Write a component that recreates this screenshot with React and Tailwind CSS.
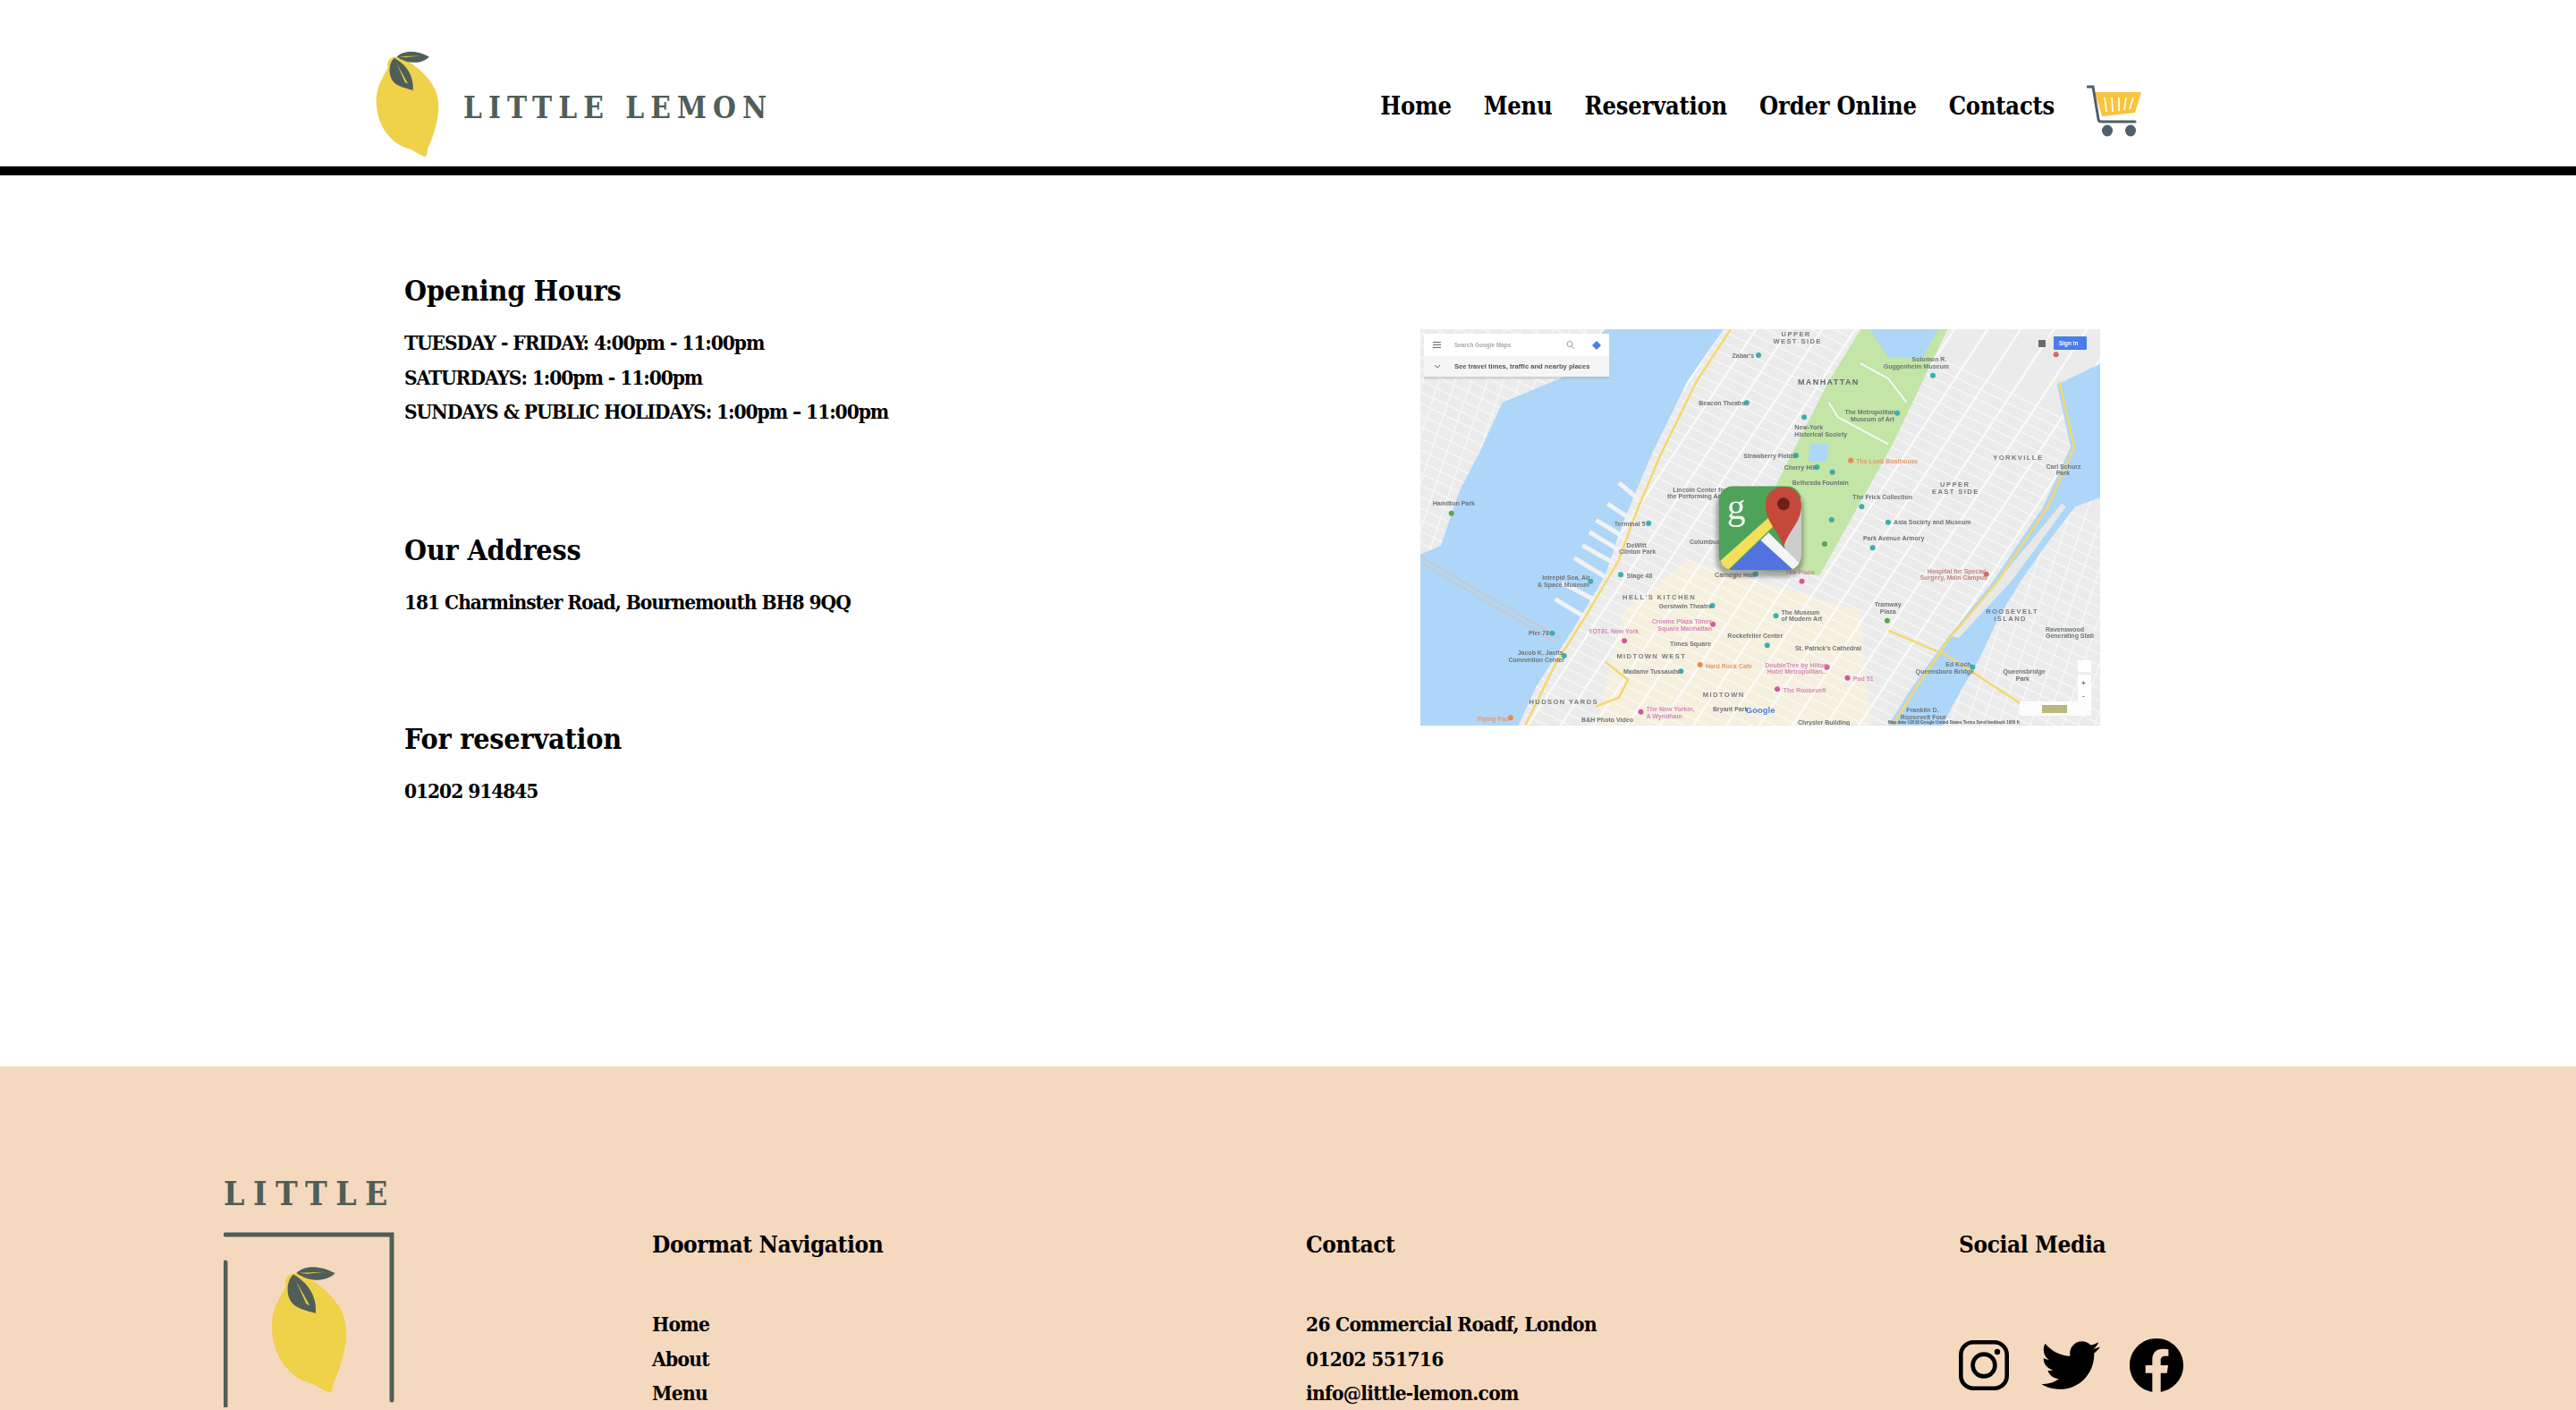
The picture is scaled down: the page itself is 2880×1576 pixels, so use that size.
import { FaTwitter, FaFacebook } from 'react-icons/fa';

// reference map was read off a zoomed crop, so keep its coords and convert here
const mx = (x) => (x - 35) / 1.96;
const my = (y) => (y - 55) / 3;
const pts = (list) => list.map(([x, y]) => `${mx(x).toFixed(1)},${my(y).toFixed(1)}`).join(' ');

const manhattan = [[700, 55], [620, 230], [540, 480], [480, 700], [440, 880], [370, 1060], [290, 1250], [250, 1383], [1060, 1383], [1110, 1260], [1190, 1090], [1290, 900], [1400, 650], [1460, 450], [1430, 240], [1525, 170], [1525, 55]];
const jersey = [[35, 55], [440, 55], [350, 215], [215, 300], [170, 450], [120, 600], [80, 780], [35, 810]];
const queens = [[1525, 620], [1470, 650], [1410, 770], [1350, 900], [1300, 1030], [1260, 1160], [1200, 1320], [1180, 1383], [1525, 1383]];
const roosevelt = [[1440, 640], [1450, 650], [1330, 900], [1215, 1090], [1200, 1085], [1300, 900]];
const park = [[1000, 55], [1190, 55], [1070, 440], [910, 880], [740, 860], [820, 560], [930, 230]];
const midtown = [[420, 1383], [480, 1000], [620, 830], [1000, 1000], [1020, 1383]];

const labels = [
  [826, 78, 'UPPER', 1], [808, 102, 'WEST SIDE', 1], [862, 240, 'MANHATTAN', 2], [1290, 494, 'YORKVILLE', 1], [1174, 582, 'UPPER', 1], [1156, 606, 'EAST SIDE', 1],
  [478, 960, "HELL'S KITCHEN", 1], [465, 1158, 'MIDTOWN WEST', 1], [654, 1288, 'MIDTOWN', 1], [273, 1313, 'HUDSON YARDS', 1], [1274, 1008, 'ROOSEVELT', 1], [1292, 1032, 'ISLAND', 1],
  [718, 150, "Zabar's", 0], [1112, 163, 'Solomon R.', 0], [1050, 186, 'Guggenheim Museum', 0], [645, 310, 'Beacon Theatre', 0], [965, 340, 'The Metropolitan', 0], [978, 363, 'Museum of Art', 0],
  [855, 392, 'New-York', 0], [855, 415, 'Historical Society', 0], [743, 488, 'Strawberry Fields', 0], [832, 527, 'Cherry Hill', 0], [850, 576, 'Bethesda Fountain', 0], [588, 600, 'Lincoln Center for', 0],
  [576, 623, 'the Performing Arts', 0], [982, 625, 'The Frick Collection', 0], [1072, 710, 'Asia Society and Museum', 0], [1005, 764, 'Park Avenue Armory', 0], [62, 645, 'Hamilton Park', 0], [460, 714, 'Terminal 5', 0],
  [625, 775, 'Columbus', 0], [487, 787, 'DeWitt', 0], [470, 809, 'Clinton Park', 0], [487, 888, 'Stage 48', 0], [302, 896, 'Intrepid Sea, Air', 0], [292, 919, '& Space Museum', 0], [680, 885, 'Carnegie Hall', 0],
  [558, 990, 'Gershwin Theatre', 0], [826, 1012, 'The Museum', 0], [826, 1034, 'of Modern Art', 0], [1030, 985, 'Tramway', 0], [1042, 1008, 'Plaza', 0], [272, 1082, 'Pier 78', 0], [708, 1090, 'Rockefeller Center', 0],
  [582, 1118, 'Times Square', 0], [856, 1133, "St. Patrick's Cathedral", 0], [248, 1148, 'Jacob K. Javits', 0], [228, 1172, 'Convention Center', 0], [480, 1210, 'Madame Tussauds', 0], [1186, 1186, 'Ed Koch', 0],
  [1120, 1210, 'Queensboro Bridge', 0], [1312, 1210, 'Queensbridge', 0], [1340, 1233, 'Park', 0], [1100, 1339, 'Franklin D.', 0], [1087, 1362, 'Roosevelt Four', 0], [676, 1337, 'Bryant Park', 0], [388, 1373, 'B&H Photo Video', 0],
  [1406, 523, 'Carl Schurz', 0], [1428, 545, 'Park', 0], [1405, 1069, 'Ravenswood', 0], [1405, 1091, 'Generating Stati', 0], [862, 1380, 'Chrysler Building', 0],
  [990, 505, 'The Loeb Boathouse', 3], [660, 1191, 'Hard Rock Cafe', 3], [160, 1369, 'Flying Pan', 3],
  [542, 1042, 'Crowne Plaza Times', 4], [555, 1066, 'Square Manhattan', 4], [403, 1075, 'YOTEL New York', 4], [790, 1188, 'DoubleTree by Hilton', 4], [795, 1211, 'Hotel Metropolitan...', 4], [983, 1234, 'Pod 51', 4],
  [830, 1272, 'The Roosevelt', 4], [530, 1337, 'The New Yorker,', 4], [530, 1360, 'A Wyndham', 4], [835, 876, 'The Plaza', 4], [1146, 874, 'Hospital for Special', 5], [1130, 896, 'Surgery, Main Campus', 5],
];

const dots = [
  [776, 142, 0], [1158, 210, 0], [750, 302, 0], [876, 350, 0], [1080, 336, 0], [858, 478, 0], [904, 518, 0], [938, 534, 0], [1002, 650, 0], [936, 694, 0], [1060, 702, 0], [1026, 788, 0], [535, 706, 0],
  [474, 878, 0], [408, 900, 0], [770, 876, 0], [675, 982, 0], [814, 1016, 0], [324, 1074, 0], [795, 1115, 0], [350, 1150, 0], [606, 1202, 0], [1245, 1188, 0],
  [978, 495, 3], [648, 1180, 3], [233, 1358, 3], [676, 1044, 4], [482, 1100, 4], [926, 1188, 4], [971, 1224, 4], [817, 1262, 4], [518, 1338, 4], [871, 900, 4], [1275, 876, 5], [1428, 140, 5],
  [103, 672, 6], [921, 775, 6], [1058, 1032, 6],
];

const labelFill = ['#6d7478', '#777b7e', '#60686c', '#e39a6c', '#d987b8', '#c98580'];
const dotFill = ['#3aaeb0', '', '', '#e88a4e', '#d9559c', '#d66a63', '#5aa64b'];

function MapPicture() {
  const avenues = Array.from({ length: 36 }, (_, i) => i);
  const streets = Array.from({ length: 80 }, (_, i) => i);
  return (
    <svg width="760" height="443" viewBox="0 0 760 443" className="block blur-[0.4px]">
      <defs>
        <clipPath id="mh"><polygon points={pts(manhattan)} /></clipPath>
        <clipPath id="side">
          <polygon points={pts(jersey)} />
          <polygon points={pts(queens)} />
        </clipPath>
        <clipPath id="icon"><rect x="95" y="40" width="277" height="282" rx="50" /></clipPath>
        <filter id="soft" x="-30%" y="-30%" width="160%" height="160%"><feGaussianBlur stdDeviation="7" /></filter>
      </defs>
      <rect width="760" height="443" fill="#aed6f8" />
      <polygon points={pts(jersey)} fill="#ebebeb" />
      <polygon points={pts(queens)} fill="#ebebeb" />
      <polygon points={pts(roosevelt)} fill="#e8e8e8" />
      <polygon points={pts(manhattan)} fill="#ebebeb" />
      <polygon points={pts(midtown)} fill="#f5f0de" clipPath="url(#mh)" />
      <g clipPath="url(#side)" stroke="#f8f8f8" strokeWidth="1.2">
        {streets.map((i) => (
          <line key={i} x1={-100 + i * 18} y1="-10" x2={-260 + i * 18} y2="460" />
        ))}
        {streets.map((i) => (
          <line key={i} x1={-100} y1={-200 + i * 13} x2={800} y2={240 + i * 13} />
        ))}
      </g>
      <g clipPath="url(#mh)" stroke="#fbfbfb">
        {avenues.map((i) => (
          <line key={i} x1={-120 + i * 37} y1="470" x2={210 + i * 37} y2="-30" strokeWidth="2.2" />
        ))}
        {streets.map((i) => (
          <line key={i} x1={-100} y1={-300 + i * 12.5} x2={800} y2={140 + i * 12.5} strokeWidth="1" />
        ))}
      </g>
      <polygon points={pts(park)} fill="#c3e5a6" clipPath="url(#mh)" />
      <polygon points={pts([[1020, 55], [1170, 55], [1135, 150], [1060, 150]])} fill="#aed6f8" />
      <polygon points={pts([[890, 440], [930, 440], [925, 500], [885, 500]])} fill="#aed6f8" />
      <polyline points={pts([[930, 300], [950, 350], [1060, 440]])} fill="none" stroke="#f8f8f8" strokeWidth="2" />
      <polyline points={pts([[1000, 170], [1060, 220], [1100, 300]])} fill="none" stroke="#f8f8f8" strokeWidth="2" />
      {/* piers on the Hudson */}
      <g stroke="#f2f2f2" strokeWidth="5">
        {[[470, 570, 525, 640], [445, 640, 505, 700], [420, 695, 490, 760], [405, 735, 475, 800], [390, 780, 460, 840], [372, 822, 440, 885], [345, 905, 420, 965], [330, 960, 395, 1020]].map(([a, b, c, d]) => (
          <line key={a} x1={mx(a)} y1={my(b)} x2={mx(c)} y2={my(d)} />
        ))}
      </g>
      {/* highways */}
      <g fill="none" stroke="#f6d868" strokeWidth="2.4">
        <polyline points={pts([[715, 55], [640, 230], [560, 480], [505, 680], [470, 830], [400, 1010], [330, 1180], [265, 1383]])} />
        <polyline points={pts([[1435, 230], [1468, 450], [1410, 650], [1300, 900], [1195, 1090], [1120, 1260], [1070, 1383]])} />
        <polyline points={pts([[1060, 1065], [1190, 1150], [1350, 1310]])} />
        <polyline points={pts([[440, 1170], [490, 1230], [470, 1290], [420, 1320]])} />
      </g>
      <g fill="none" stroke="#c9c9c9" strokeWidth="2">
        <polyline points={pts([[35, 815], [160, 930], [340, 1090]])} />
        <polyline points={pts([[35, 835], [160, 950], [330, 1105]])} />
      </g>
      {dots.map(([x, y, c], i) => (
        <circle key={i} cx={mx(x)} cy={my(y)} r="3" fill={dotFill[c]} />
      ))}
      {labels.map(([x, y, text, c], i) => (
        <text key={i} x={mx(x)} y={my(y)} fill={labelFill[c]} fontFamily="Liberation Sans, sans-serif" fontSize={c === 1 ? 7.6 : c === 2 ? 9 : 7} letterSpacing={c === 1 || c === 2 ? 1.4 : 0}>
          {text}
        </text>
      ))}
      <text x={mx(748)} y={my(1342)} fontFamily="Liberation Sans, sans-serif" fontSize="9.5" fill="#4c7fe0">Google</text>
      <text x={mx(1060)} y={my(1378)} fontFamily="Liberation Sans, sans-serif" fontSize="4.6" fill="#555">Map data ©2018 Google   United States   Terms   Send feedback   1000 ft</text>

      {/* search box */}
      <g>
        <rect x="4" y="5" width="207" height="49" fill="#9a9a9a" opacity="0.35" transform="translate(0 1.5)" />
        <rect x="4" y="5" width="207" height="25" fill="#fff" />
        <rect x="4" y="30" width="207" height="23" fill="#f5f5f5" />
        <path d="M 14 14.5 h 9 M 14 17.5 h 9 M 14 20.5 h 9" stroke="#666" strokeWidth="1.2" />
        <text x="38" y="20" fontFamily="Liberation Sans, sans-serif" fontSize="6.4" fill="#a7a7a7">Search Google Maps</text>
        <circle cx="167" cy="16.5" r="3" fill="none" stroke="#9b9b9b" /><line x1="169" y1="19" x2="172" y2="22" stroke="#9b9b9b" />
        <polygon points="197,13 202,18 197,23 192,18" fill="#4a7de8" />
        <path d="M 16 40 l 3 3 l 3 -3" fill="none" stroke="#666" />
        <text x="38" y="44" fontFamily="Liberation Sans, sans-serif" fontSize="7.6" fill="#555">See travel times, traffic and nearby places</text>
      </g>
      <rect x="708" y="8" width="37" height="15" rx="1" fill="#4a7de8" />
      <text x="714" y="18" fontFamily="Liberation Sans, sans-serif" fontSize="6.4" fontWeight="700" fill="#fff">Sign in</text>
      <rect x="691" y="12" width="8" height="8" fill="#6b6b6b" />
      <rect x="735" y="370" width="15" height="13" fill="#fff" />
      <rect x="735" y="386" width="15" height="30" fill="#fff" />
      <text x="739" y="398" fontFamily="Liberation Sans, sans-serif" fontSize="8" fontWeight="700" fill="#666">+</text>
      <text x="740" y="412" fontFamily="Liberation Sans, sans-serif" fontSize="8" fontWeight="700" fill="#666">-</text>
      <rect x="670" y="416" width="80" height="16" fill="#fff" opacity="0.85" />
      <rect x="695" y="420" width="28" height="9" fill="#b9b97a" />

      {/* maps app icon */}
      <g transform="translate(302 162) scale(0.3333)">
        <rect x="85" y="50" width="295" height="295" rx="60" fill="#555" opacity="0.45" filter="url(#soft)" />
        <g clipPath="url(#icon)">
          <rect x="95" y="40" width="277" height="282" fill="#4ea25a" />
          <polygon points="285,165 372,80 372,322 345,322" fill="#cdcdcd" />
          <polygon points="235,222 262,196 372,305 372,322 345,322" fill="#f4f4f4" />
          <polygon points="235,222 345,322 130,322" fill="#5272e2" />
          <polygon points="100,290 268,140 288,165 125,322 112,322" fill="#f2e05c" />
        </g>
        <text x="122" y="150" fontFamily="Liberation Serif, serif" fontSize="125" fontWeight="400" fill="#f4f8f2">g</text>
        <path d="M 312 248 C 302 195 252 165 252 104 C 252 68 278 42 312 42 C 346 42 372 68 372 104 C 372 165 322 195 312 248 Z" fill="#c4493a" />
        <circle cx="312" cy="100" r="21" fill="#6f1f1a" />
      </g>
    </svg>
  );
}

function Lemon({ className }) {
  return (
    <svg viewBox="58 76 216 364" className={className}>
      <path d="M 125 98 C 100 100 95 120 100 135 C 85 165 62 195 60 245 C 60 290 75 340 105 370 C 125 395 150 405 175 412 C 190 420 205 430 225 438 C 235 435 232 420 235 410 C 250 380 272 320 272 265 C 272 210 240 165 185 125 C 165 110 145 100 125 98 Z" fill="#efd14a" />
      <path d="M 130 98 C 150 78 190 72 240 98 C 225 115 180 132 130 98 Z" fill="#4f5f58" />
      <path d="M 138 97 L 210 95 L 160 100 Z" fill="#efd14a" />
      <path d="M 122 102 C 100 120 100 165 120 185 C 135 200 160 205 185 212 C 188 170 170 130 122 102 Z" fill="#4f5f58" />
      <path d="M 130 122 L 168 190 L 158 185 Z" fill="#efd14a" />
    </svg>
  );
}

function Cart() {
  return (
    <svg width="61" height="58" viewBox="0 0 61 58">
      <polygon points="9,8 61,8 54,31 17,35" fill="#f9c440" />
      <path d="M 20 14 L 22 30 M 28 14 L 29 30 M 36 14 L 36 29 M 44 14 L 42 28 M 52 14 L 48 27" stroke="#fff" strokeWidth="1.6" />
      <path d="M 1 2 H 7 L 13 38 Q 13 41 17 41 H 54" fill="none" stroke="#4f5f6b" strokeWidth="3" strokeLinecap="round" />
      <ellipse cx="23" cy="51" rx="6" ry="6.5" fill="#4f5f6b" />
      <ellipse cx="49" cy="51" rx="6" ry="6.5" fill="#4f5f6b" />
    </svg>
  );
}

function Instagram() {
  return (
    <svg width="56" height="56" viewBox="0 0 56 56" fill="none" stroke="#000" strokeWidth="4.6">
      <rect x="2.3" y="2.3" width="51.4" height="51.4" rx="14" />
      <circle cx="28" cy="28" r="12.4" />
      <circle cx="43" cy="13" r="3.2" fill="#000" stroke="none" />
    </svg>
  );
}

function InfoBlock({ title, lines, className }) {
  return (
    <section className={className}>
      <h2 className="text-[32px] leading-[44px] tracking-[-0.2px]">{title}</h2>
      <div className="mt-[17px] text-[22.5px] leading-[38.5px] tracking-[-1.05px]">
        {lines.map((line) => <p key={line}>{line}</p>)}
      </div>
    </section>
  );
}

function FooterList({ title, lines, className }) {
  return (
    <div className={className}>
      <h3 className="text-[26px] leading-[40px] tracking-[-0.4px]">{title}</h3>
      <ul className="mt-[50px] text-[22.5px] leading-[38.5px] tracking-[-0.7px]">
        {lines.map((line) => <li key={line}>{line}</li>)}
      </ul>
    </div>
  );
}

export default function App() {
  return (
    <div className="h-[1576px] overflow-hidden bg-white font-['DejaVu_Serif_Condensed','DejaVu_Serif',serif] font-bold text-black">
      <header className="flex h-[196px] items-start justify-between border-b-[10px] border-black pl-[420px] pr-[486px]">
        <div className="flex items-center pt-[56px]">
          <Lemon className="h-[120px] w-[71px]" />
          <span className="ml-[27px] mt-[8px] text-[33px] leading-none tracking-[7.1px] text-[#4f5f58]">LITTLE LEMON</span>
        </div>
        <div className="flex items-start pt-[95px]">
          <nav className="mr-[36px] mt-[2px] flex gap-[36px] text-[27px] leading-[44px] tracking-[-0.2px]">
            {['Home', 'Menu', 'Reservation', 'Order Online', 'Contacts'].map((item) => (
              <a key={item}>{item}</a>
            ))}
          </nav>
          <Cart />
        </div>
      </header>

      <main className="flex h-[996px] pl-[452px]">
        <div className="w-[1136px] pt-[107px]">
          <InfoBlock title="Opening Hours" lines={['TUESDAY - FRIDAY: 4:00pm - 11:00pm', 'SATURDAYS: 1:00pm - 11:00pm', 'SUNDAYS & PUBLIC HOLIDAYS: 1:00pm – 11:00pm']} />
          <InfoBlock className="mt-[113px]" title="Our Address" lines={['181 Charminster Road, Bournemouth BH8 9QQ']} />
          <InfoBlock className="mt-[112px]" title="For reservation" lines={['01202 914845']} />
        </div>
        <div className="pt-[172px]">
          <MapPicture />
        </div>
      </main>

      <footer className="flex h-[384px] bg-[#f5d9be] pl-[250px]">
        <div className="w-[479px] pt-[119px]">
          <div className="text-[37px] leading-[46px] tracking-[9.5px] text-[#4f5f58]">LITTLE</div>
          <div className="relative mt-[20px] h-[196px] w-[195px]">
            <svg width="195" height="196" viewBox="0 0 195 196" fill="none" stroke="#4f5f58" strokeWidth="5" strokeLinecap="round" className="absolute inset-0">
              <path d="M 2 3 H 188 V 188" />
              <path d="M 2 34 V 200" />
            </svg>
            <Lemon className="absolute left-[53px] top-[37px] h-[144px] w-[85px]" />
          </div>
        </div>
        <FooterList className="w-[731px] pt-[179px]" title="Doormat Navigation" lines={['Home', 'About', 'Menu']} />
        <FooterList className="w-[730px] pt-[179px]" title="Contact" lines={['26 Commercial Roadf, London', '01202 551716', 'info@little-lemon.com']} />
        <div className="pt-[179px]">
          <h3 className="text-[26px] leading-[40px] tracking-[-0.4px]">Social Media</h3>
          <div className="mt-[82px] flex items-center">
            <Instagram />
            <FaTwitter className="ml-[36px] text-[66px]" />
            <FaFacebook className="ml-[32px] text-[62px]" />
          </div>
        </div>
      </footer>
    </div>
  );
}
